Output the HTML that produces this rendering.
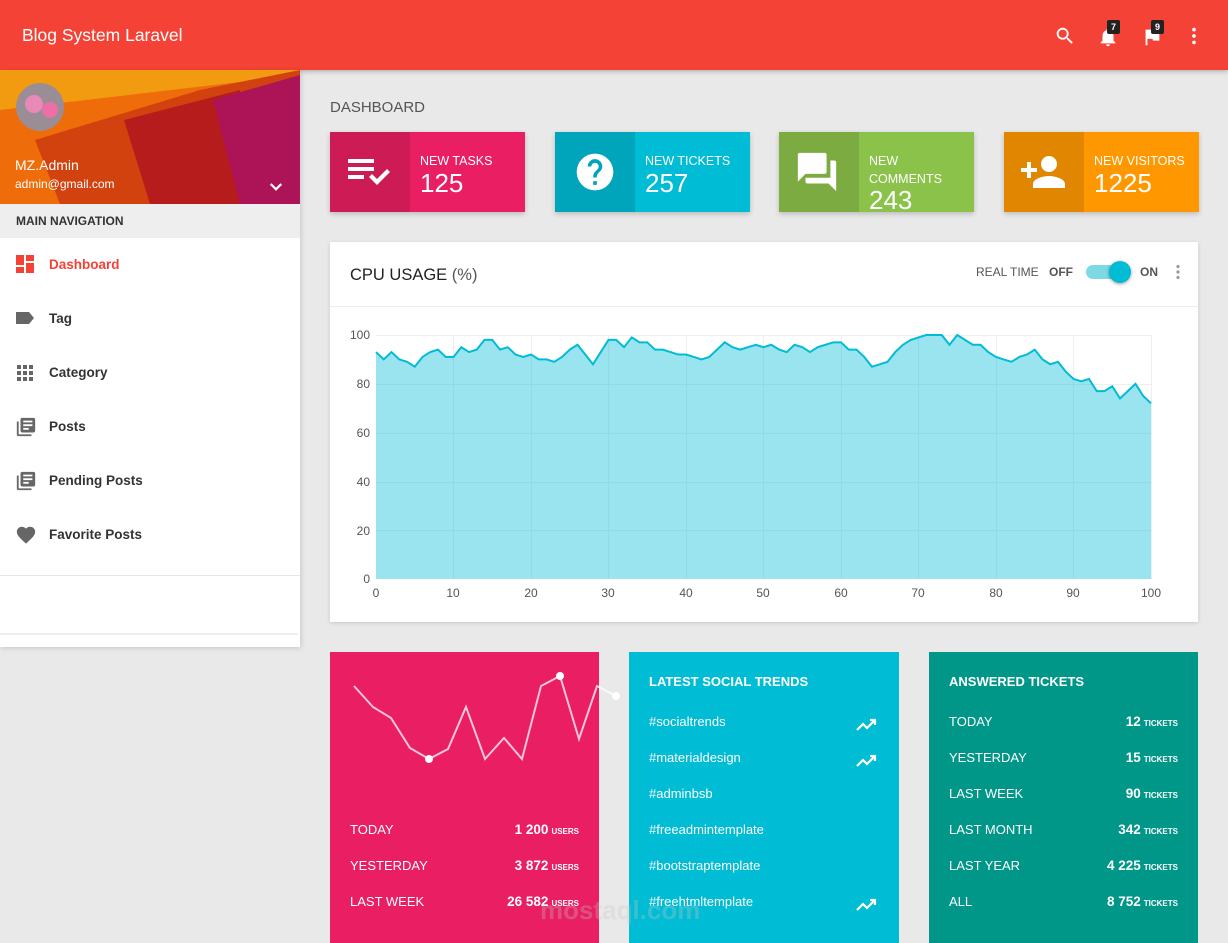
<!DOCTYPE html>
<html><head><meta charset="utf-8">
<style>
*{margin:0;padding:0;box-sizing:border-box}
body{width:1228px;height:943px;overflow:hidden;background:#e9e9e9;font-family:"Liberation Sans",Arial,sans-serif;position:relative}
.a{position:absolute}
.top{left:0;top:0;width:1228px;height:70px;background:#f44336;box-shadow:0 1px 5px rgba(0,0,0,.3)}
.brand{left:22px;top:25px;color:#fff;font-size:17.5px}
.badge{background:#222;color:#fff;font-size:9px;font-weight:bold;width:13px;height:14px;line-height:14px;text-align:center;border-radius:2px}
.side{left:0;top:70px;width:300px;height:577px;background:#fff;box-shadow:1px 1px 5px rgba(0,0,0,.15)}
.nav{left:0;width:300px;height:54px;font-size:13.5px;font-weight:bold;color:#333}
.nav span{position:absolute;left:49px;top:19px}
.nav svg{position:absolute;left:15px;top:16px}
.ib{top:132px;width:195px;height:80px;color:#fff;box-shadow:0 2px 5px rgba(0,0,0,.2)}
.ib .ic{position:absolute;left:0;top:0;width:80px;height:80px}
.ib .t{position:absolute;left:90px;top:20px;font-size:12.5px;line-height:18px}
.ib .n{position:absolute;left:90px;top:36px;font-size:26px}
.card{background:#fff;box-shadow:0 1px 4px rgba(0,0,0,.15)}
.row{position:absolute;left:20px;right:20px;font-size:13px;color:#fff}
.row b{position:absolute;right:0;top:0;font-size:13.5px}
.row b small{font-size:8px;font-weight:bold;margin-left:3px}
</style></head><body>

<div class="a top"></div>
<div class="a brand">Blog System Laravel</div>
<svg class="a" style="left:1054px;top:25px" width="22" height="22" viewBox="0 0 24 24"><path fill="#fff" d="M15.5 14h-.8l-.3-.3A6.5 6.5 0 1 0 9.5 16a6.5 6.5 0 0 0 4.2-1.6l.3.3v.8l5 5 1.5-1.5-5-5zm-6 0a4.5 4.5 0 1 1 0-9 4.5 4.5 0 0 1 0 9z"/></svg>
<svg class="a" style="left:1097px;top:26px" width="22" height="22" viewBox="0 0 24 24"><path fill="#fff" d="M12 22a2 2 0 0 0 2-2h-4a2 2 0 0 0 2 2zm6-6v-5c0-3-1.6-5.6-4.5-6.3V4a1.5 1.5 0 0 0-3 0v.7C7.6 5.4 6 8 6 11v5l-2 2v1h16v-1l-2-2z"/></svg>
<div class="a badge" style="left:1107px;top:20px">7</div>
<svg class="a" style="left:1141px;top:26px" width="22" height="22" viewBox="0 0 24 24"><path fill="#fff" d="M14.4 6L14 4H5v17h2v-7h5.6l.4 2h7V6z"/></svg>
<div class="a badge" style="left:1151px;top:20px">9</div>
<svg class="a" style="left:1183px;top:25px" width="22" height="22" viewBox="0 0 24 24"><circle cx="12" cy="5" r="2" fill="#fff"/><circle cx="12" cy="12" r="2" fill="#fff"/><circle cx="12" cy="19" r="2" fill="#fff"/></svg>

<div class="a side"></div>
<svg class="a" style="left:0;top:70px" width="300" height="134" viewBox="0 0 300 134">
<rect width="300" height="134" fill="#ee6c0a"/>
<polygon points="0,0 300,0 300,5 0,40" fill="#f29a10"/>
<polygon points="35,70 200,20 300,0 300,134 60,134" fill="#d2420f"/>
<polygon points="124,50 240,20 250,134 150,134" fill="#b71c1c"/>
<polygon points="213,30 300,5 300,134 240,134" fill="#ad1457"/>
<circle cx="40" cy="37" r="24" fill="#9a8d96"/>
<circle cx="34" cy="34" r="9" fill="#e889b8"/>
<circle cx="50" cy="40" r="8" fill="#ec6fa6"/>
</svg>
<div class="a" style="left:15px;top:157px;color:#fff;font-size:14px">MZ.Admin</div>
<div class="a" style="left:15px;top:177px;color:#fff;font-size:12px">admin@gmail.com</div>
<svg class="a" style="left:267px;top:178px" width="18" height="18" viewBox="0 0 24 24"><path d="M5 8l7 7 7-7" stroke="#fff" stroke-width="3" fill="none"/></svg>
<div class="a" style="left:0;top:204px;width:300px;height:34px;background:#eee"></div>
<div class="a" style="left:16px;top:214px;font-size:12px;font-weight:bold;color:#333">MAIN NAVIGATION</div>

<div class="a nav" style="top:238px;color:#f44336"><svg width="20" height="20" viewBox="0 0 20 20"><path fill="#f44336" d="M1 1h8v10H1zM11 1h8v6h-8zM11 9h8v10h-8zM1 13h8v6H1z"/></svg><span>Dashboard</span></div>
<div class="a nav" style="top:292px"><svg width="20" height="20" viewBox="0 0 20 20"><path fill="#666" d="M1 4h13l5 6-5 6H1z"/></svg><span>Tag</span></div>
<div class="a nav" style="top:346px"><svg width="20" height="20" viewBox="0 0 20 20"><g fill="#666"><rect x="2" y="3" width="4" height="4"/><rect x="8" y="3" width="4" height="4"/><rect x="14" y="3" width="4" height="4"/><rect x="2" y="9" width="4" height="4"/><rect x="8" y="9" width="4" height="4"/><rect x="14" y="9" width="4" height="4"/><rect x="2" y="15" width="4" height="4"/><rect x="8" y="15" width="4" height="4"/><rect x="14" y="15" width="4" height="4"/></g></svg><span>Category</span></div>
<div class="a nav" style="top:400px"><svg width="22" height="22" viewBox="0 0 24 24"><path fill="#666" d="M4 6H2v14a2 2 0 0 0 2 2h14v-2H4zm16-4H8a2 2 0 0 0-2 2v12a2 2 0 0 0 2 2h12a2 2 0 0 0 2-2V4a2 2 0 0 0-2-2zm-1 9H9V9h10zm-4 4H9v-2h6zm4-8H9V5h10z"/></svg><span>Posts</span></div>
<div class="a nav" style="top:454px"><svg width="22" height="22" viewBox="0 0 24 24"><path fill="#666" d="M4 6H2v14a2 2 0 0 0 2 2h14v-2H4zm16-4H8a2 2 0 0 0-2 2v12a2 2 0 0 0 2 2h12a2 2 0 0 0 2-2V4a2 2 0 0 0-2-2zm-1 9H9V9h10zm-4 4H9v-2h6zm4-8H9V5h10z"/></svg><span>Pending Posts</span></div>
<div class="a nav" style="top:508px"><svg width="22" height="22" viewBox="0 0 24 24"><path fill="#666" d="M12 21.4l-1.5-1.3C5.4 15.4 2 12.3 2 8.5 2 5.4 4.4 3 7.5 3c1.7 0 3.4.8 4.5 2.1C13.1 3.8 14.8 3 16.5 3 19.6 3 22 5.4 22 8.5c0 3.8-3.4 6.9-8.5 11.5z"/></svg><span>Favorite Posts</span></div>
<div class="a" style="left:0;top:575px;width:300px;height:1px;background:#e6e6e6"></div>
<div class="a" style="left:0;top:633px;width:298px;height:2px;background:#eee"></div>

<div class="a" style="left:330px;top:99px;font-size:15px;color:#555">DASHBOARD</div>

<div class="a ib" style="left:330px;background:#e91e63"><div class="ic" style="background:#cc1b55"><svg style="position:absolute;left:17px;top:22px" width="48" height="36" viewBox="0 0 48 36"><g fill="#fff"><rect x="1" y="5" width="26" height="4"/><rect x="1" y="13" width="26" height="4"/><rect x="1" y="21" width="16" height="4"/><path d="M22 23l3-3 5 5 10-10 3 3-13 13z"/></g></svg></div><div class="t">NEW TASKS</div><div class="n">125</div></div>
<div class="a ib" style="left:555px;background:#00bcd4"><div class="ic" style="background:#00a5bb"><svg style="position:absolute;left:18px;top:18px" width="44" height="44" viewBox="0 0 24 24"><path fill="#fff" d="M12 2a10 10 0 1 0 0 20 10 10 0 0 0 0-20zm1 17h-2v-2h2zm2.1-7.7l-.9.9c-.7.7-1.2 1.3-1.2 2.8h-2v-.5c0-1.1.4-2.1 1.2-2.8l1.2-1.3A2 2 0 0 0 14 9a2 2 0 0 0-4 0H8a4 4 0 0 1 8 0c0 .9-.4 1.7-.9 2.3z"/></svg></div><div class="t">NEW TICKETS</div><div class="n">257</div></div>
<div class="a ib" style="left:779px;background:#8bc34a"><div class="ic" style="background:#7cab42"><svg style="position:absolute;left:15px;top:17px" width="46" height="46" viewBox="0 0 24 24"><path fill="#fff" d="M21 6h-2v9H6v2c0 .6.4 1 1 1h11l4 4V7c0-.6-.4-1-1-1zm-4 6V3c0-.6-.4-1-1-1H3c-.6 0-1 .4-1 1v14l4-4h10c.6 0 1-.4 1-1z"/></svg></div><div class="t">NEW<br>COMMENTS</div><div class="n" style="top:53px">243</div></div>
<div class="a ib" style="left:1004px;background:#ff9800"><div class="ic" style="background:#e08600"><svg style="position:absolute;left:14px;top:16px" width="50" height="48" viewBox="0 0 24 24"><path fill="#fff" d="M15 12a4 4 0 1 0 0-8 4 4 0 0 0 0 8zm-9-2V7H4v3H1v2h3v3h2v-3h3v-2zm9 4c-2.7 0-8 1.3-8 4v2h16v-2c0-2.7-5.3-4-8-4z"/></svg></div><div class="t">NEW VISITORS</div><div class="n">1225</div></div>

<div class="a card" style="left:330px;top:242px;width:868px;height:380px"></div>
<div class="a" style="left:330px;top:306px;width:868px;height:1px;background:#eee"></div>
<div class="a" style="left:350px;top:266px;font-size:16.5px;color:#222">CPU USAGE <span style="color:#555">(%)</span></div>
<div class="a" style="left:976px;top:265px;font-size:12px;color:#555">REAL TIME</div>
<div class="a" style="left:1049px;top:265px;font-size:12px;font-weight:bold;color:#555">OFF</div>
<div class="a" style="left:1086px;top:265px;width:44px;height:14px;border-radius:7px;background:#7ed8e5"></div>
<div class="a" style="left:1109px;top:261px;width:22px;height:22px;border-radius:50%;background:#00bcd4;box-shadow:0 1px 3px rgba(0,0,0,.4)"></div>
<div class="a" style="left:1140px;top:265px;font-size:12px;font-weight:bold;color:#555">ON</div>
<svg class="a" style="left:1175px;top:264px" width="6" height="16"><circle cx="3" cy="2.5" r="1.6" fill="#999"/><circle cx="3" cy="8" r="1.6" fill="#999"/><circle cx="3" cy="13.5" r="1.6" fill="#999"/></svg>

<svg class="a" style="left:0;top:0" width="1228" height="943">
<g stroke="#eee" stroke-width="1">
<line x1="376" y1="335.5" x2="1151" y2="335.5"/><line x1="376" y1="384.5" x2="1151" y2="384.5"/><line x1="376" y1="433.5" x2="1151" y2="433.5"/><line x1="376" y1="482.5" x2="1151" y2="482.5"/><line x1="376" y1="530.5" x2="1151" y2="530.5"/>
<line x1="453.5" y1="335" x2="453.5" y2="579"/><line x1="531.5" y1="335" x2="531.5" y2="579"/><line x1="608.5" y1="335" x2="608.5" y2="579"/><line x1="686.5" y1="335" x2="686.5" y2="579"/><line x1="763.5" y1="335" x2="763.5" y2="579"/><line x1="841.5" y1="335" x2="841.5" y2="579"/><line x1="918.5" y1="335" x2="918.5" y2="579"/><line x1="996.5" y1="335" x2="996.5" y2="579"/><line x1="1073.5" y1="335" x2="1073.5" y2="579"/><line x1="1151.5" y1="335" x2="1151.5" y2="579"/>
</g>
<g transform="translate(376,579) scale(7.75,-2.44)">
<polygon fill="#00bcd4" fill-opacity=".4" points="0,0 0,93 1,90 2,93 3,90 4,89 5,87 6,91 7,93 8,94 9,91 10,91 11,95 12,93 13,94 14,98 15,98 16,94 17,95 18,92 19,91 20,92 21,90 22,90 23,89 24,91 25,94 26,96 27,92 28,88 29,93 30,98 31,98 32,95 33,99 34,97 35,97 36,94 37,94 38,93 39,92 40,92 41,91 42,90 43,91 44,94 45,97 46,95 47,94 48,95 49,96 50,95 51,96 52,94 53,93 54,96 55,95 56,93 57,95 58,96 59,97 60,97 61,94 62,94 63,91 64,87 65,88 66,89 67,93 68,96 69,98 70,99 71,100 72,100 73,100 74,96 75,100 76,98 77,96 78,96 79,93 80,91 81,90 82,89 83,91 84,92 85,94 86,90 87,88 88,89 89,85 90,82 91,81 92,82 93,77 94,77 95,79 96,74 97,77 98,80 99,75 100,72 100,0"/>
<polyline fill="none" stroke="#00bcd4" stroke-width="2" vector-effect="non-scaling-stroke" points="0,93 1,90 2,93 3,90 4,89 5,87 6,91 7,93 8,94 9,91 10,91 11,95 12,93 13,94 14,98 15,98 16,94 17,95 18,92 19,91 20,92 21,90 22,90 23,89 24,91 25,94 26,96 27,92 28,88 29,93 30,98 31,98 32,95 33,99 34,97 35,97 36,94 37,94 38,93 39,92 40,92 41,91 42,90 43,91 44,94 45,97 46,95 47,94 48,95 49,96 50,95 51,96 52,94 53,93 54,96 55,95 56,93 57,95 58,96 59,97 60,97 61,94 62,94 63,91 64,87 65,88 66,89 67,93 68,96 69,98 70,99 71,100 72,100 73,100 74,96 75,100 76,98 77,96 78,96 79,93 80,91 81,90 82,89 83,91 84,92 85,94 86,90 87,88 88,89 89,85 90,82 91,81 92,82 93,77 94,77 95,79 96,74 97,77 98,80 99,75 100,72"/>
</g>
<g font-family="Liberation Sans, sans-serif" font-size="12" fill="#555" text-anchor="end">
<text x="370" y="339">100</text><text x="370" y="388">80</text><text x="370" y="437">60</text><text x="370" y="486">40</text><text x="370" y="535">20</text><text x="370" y="583">0</text>
</g>
<g font-family="Liberation Sans, sans-serif" font-size="12" fill="#555" text-anchor="middle">
<text x="376" y="597">0</text><text x="453" y="597">10</text><text x="531" y="597">20</text><text x="608" y="597">30</text><text x="686" y="597">40</text><text x="763" y="597">50</text><text x="841" y="597">60</text><text x="918" y="597">70</text><text x="996" y="597">80</text><text x="1073" y="597">90</text><text x="1151" y="597">100</text>
</g>
</svg>

<div class="a" style="left:330px;top:652px;width:269px;height:291px;background:#e91e63"></div>
<div class="a" style="left:629px;top:652px;width:270px;height:291px;background:#00bcd4"></div>
<div class="a" style="left:929px;top:652px;width:269px;height:291px;background:#009688"></div>

<svg class="a" style="left:0;top:0" width="1228" height="943">
<polyline fill="none" stroke="#fff" stroke-opacity=".75" stroke-width="2" points="354,686 373,707 391,718 410,748 429,759 448,749 466,707 485,759 504,738 522,759 541,686 560,676 579,739 597,686 616,696"/>
<circle cx="429" cy="759" r="4" fill="#fff"/><circle cx="560" cy="676" r="4" fill="#fff"/><circle cx="616" cy="696" r="4" fill="#fff"/>
</svg>

<div class="a" style="left:330px;top:652px;width:269px;height:291px">
<div class="row" style="top:170px">TODAY<b>1 200<small>USERS</small></b></div>
<div class="row" style="top:206px">YESTERDAY<b>3 872<small>USERS</small></b></div>
<div class="row" style="top:242px">LAST WEEK<b>26 582<small>USERS</small></b></div>
</div>

<div class="a" style="left:629px;top:652px;width:270px;height:291px">
<div class="row" style="top:22px;font-weight:bold">LATEST SOCIAL TRENDS</div>
<div class="row" style="top:62px">#socialtrends</div>
<div class="row" style="top:98px">#materialdesign</div>
<div class="row" style="top:134px">#adminbsb</div>
<div class="row" style="top:170px">#freeadmintemplate</div>
<div class="row" style="top:206px">#bootstraptemplate</div>
<div class="row" style="top:242px">#freehtmltemplate</div>
<svg class="a" style="left:226px;top:64px" width="24" height="18" viewBox="0 0 24 18"><path d="M2 14l6-6 4 4 8-8M15 4h5v5" stroke="#fff" stroke-width="2.2" fill="none"/></svg>
<svg class="a" style="left:226px;top:100px" width="24" height="18" viewBox="0 0 24 18"><path d="M2 14l6-6 4 4 8-8M15 4h5v5" stroke="#fff" stroke-width="2.2" fill="none"/></svg>
<svg class="a" style="left:226px;top:244px" width="24" height="18" viewBox="0 0 24 18"><path d="M2 14l6-6 4 4 8-8M15 4h5v5" stroke="#fff" stroke-width="2.2" fill="none"/></svg>
</div>

<div class="a" style="left:929px;top:652px;width:269px;height:291px">
<div class="row" style="top:22px;font-weight:bold">ANSWERED TICKETS</div>
<div class="row" style="top:62px">TODAY<b>12<small>TICKETS</small></b></div>
<div class="row" style="top:98px">YESTERDAY<b>15<small>TICKETS</small></b></div>
<div class="row" style="top:134px">LAST WEEK<b>90<small>TICKETS</small></b></div>
<div class="row" style="top:170px">LAST MONTH<b>342<small>TICKETS</small></b></div>
<div class="row" style="top:206px">LAST YEAR<b>4 225<small>TICKETS</small></b></div>
<div class="row" style="top:242px">ALL<b>8 752<small>TICKETS</small></b></div>
</div>

<div class="a" style="left:540px;top:895px;font-size:26px;font-weight:bold;color:rgba(200,200,200,.3)">mostaql.com</div>
</body></html>
